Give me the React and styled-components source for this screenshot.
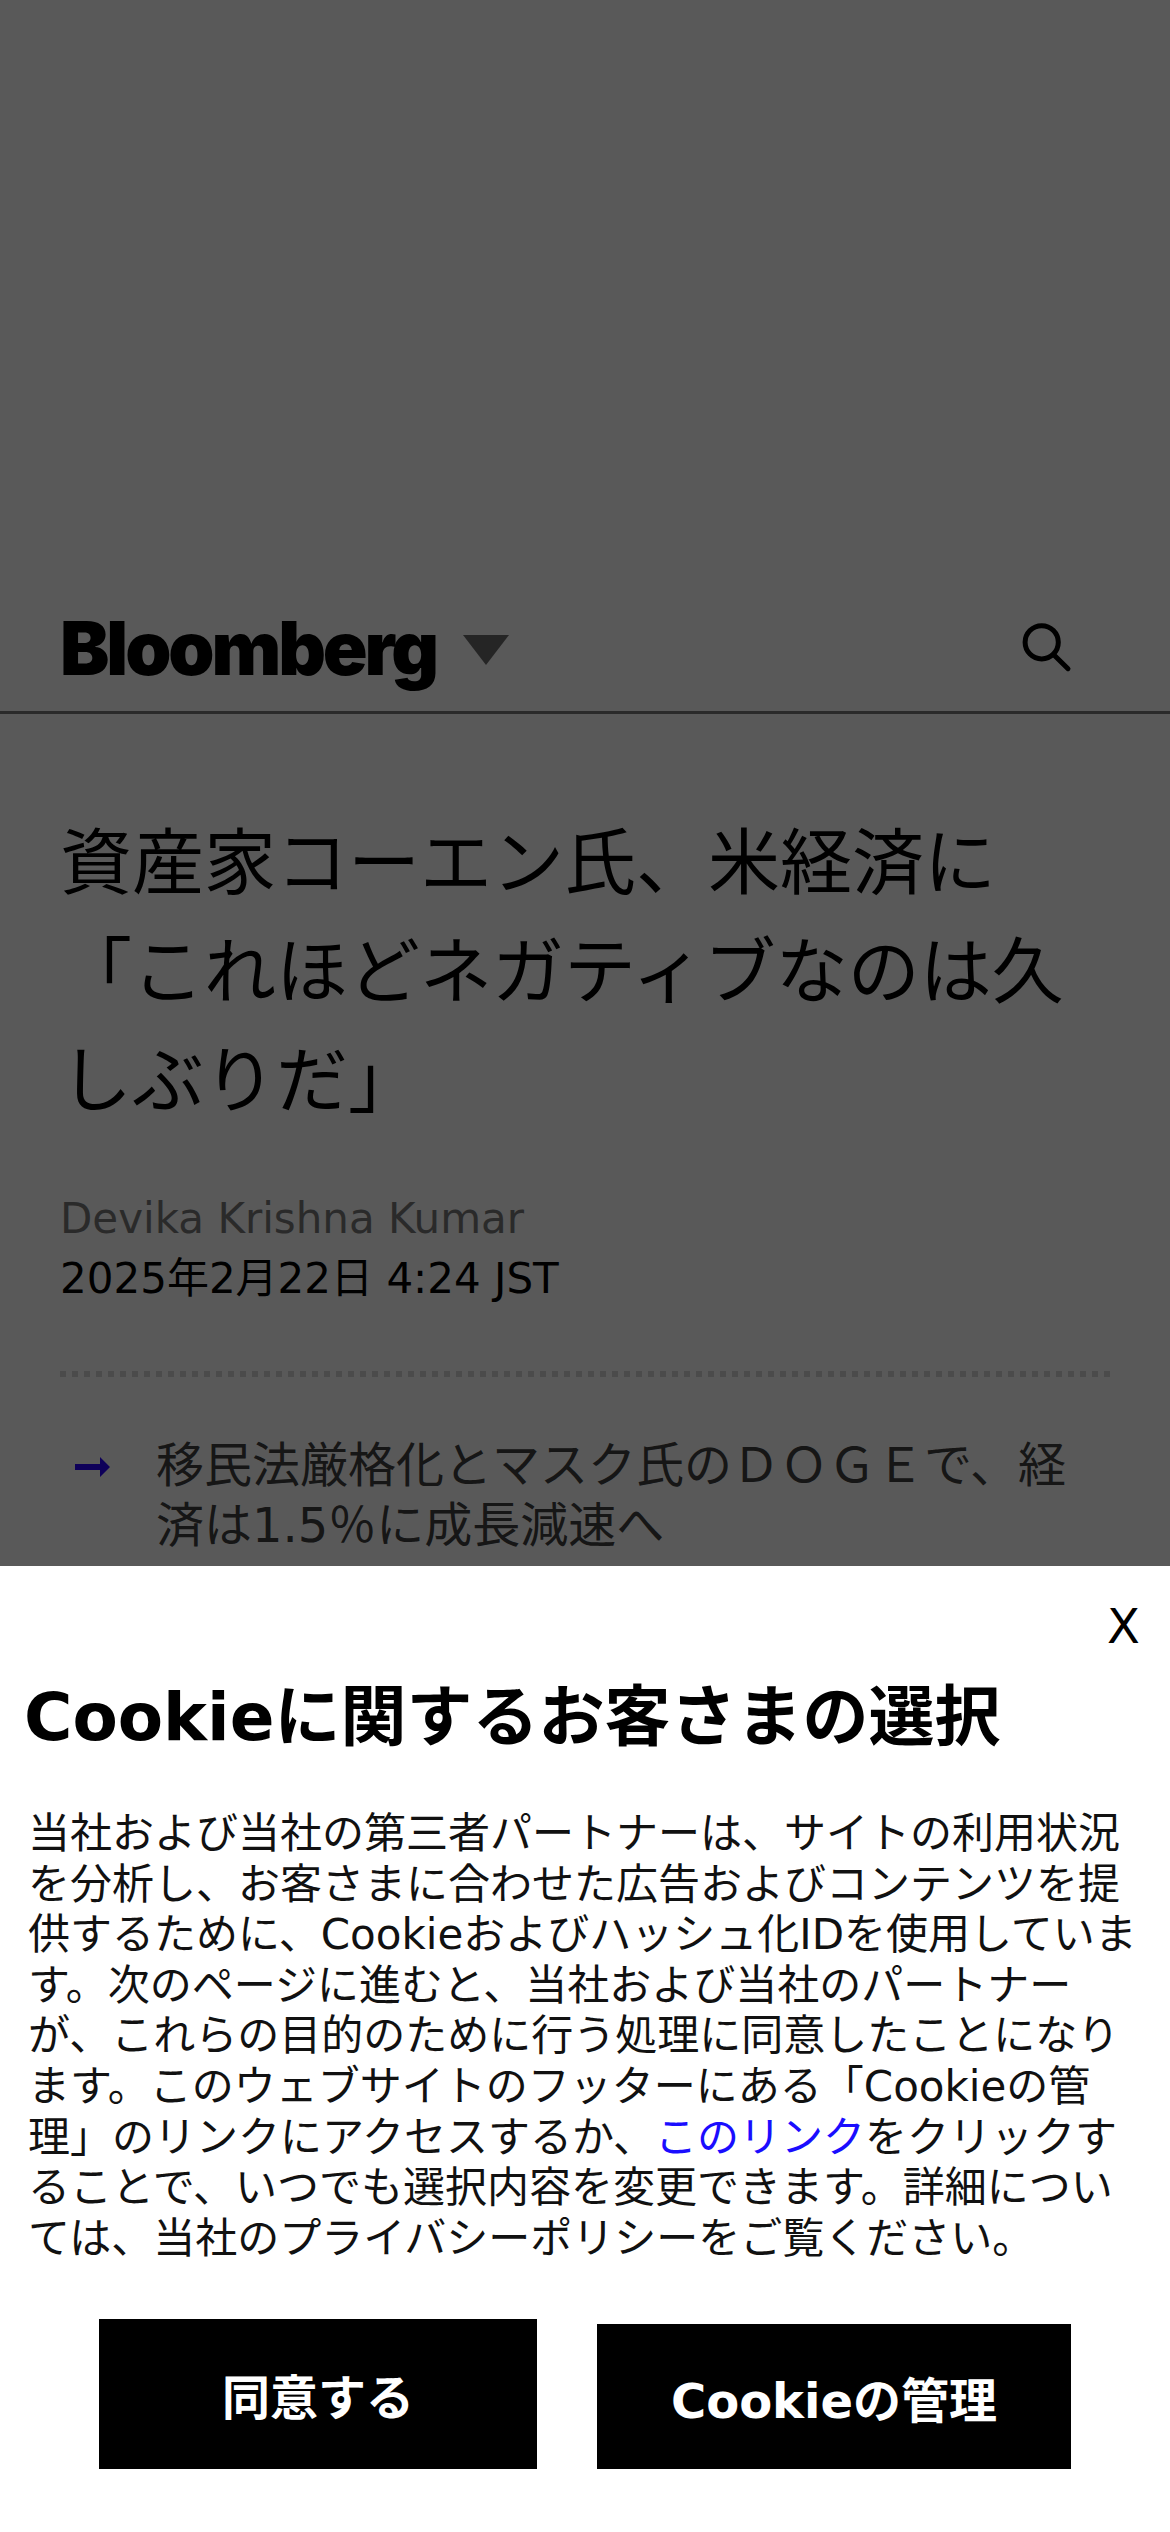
import styled, { createGlobalStyle } from 'styled-components';

const GlobalStyle = createGlobalStyle`
	* {
		box-sizing: border-box;
		margin: 0;
		padding: 0;
	}

	body {
		background: #fff;
		color: #000;
		font-family: 'DejaVu Sans', 'Noto Sans CJK JP', sans-serif;
	}
`;

const Page = styled.div`
	position: relative;
	width: 1170px;
	height: 2532px;
	overflow: hidden;
`;

const AdSpace = styled.div`
	height: 590px;
`;

const Header = styled.header`
	display: flex;
	align-items: center;
	height: 124px;
	padding: 0 97px 0 60px;
	border-bottom: 3px solid #787878;
`;

const Logo = styled.a`
	width: 376px;
	margin-bottom: 5px;
	font-family: Inter, sans-serif;
	font-size: 74px;
	font-weight: 900;
	line-height: 110px;
	letter-spacing: -3.1px;
	white-space: nowrap;
`;

const Caret = styled.span`
	margin-left: 27px;
	border-top: 30px solid #6c6c6c;
	border-left: 23.5px solid transparent;
	border-right: 23.5px solid transparent;
	margin-bottom: 1px;
`;

const SearchButton = styled.button`
	display: flex;
	margin-left: auto;
	margin-bottom: 6px;
	border: none;
	background: none;
`;

const Article = styled.main`
	padding: 95px 60px 0;
`;

const Headline = styled.h1`
	font-size: 72px;
	font-weight: 400;
	line-height: 109px;
`;

const Byline = styled.div`
	margin-top: 53px;
	font-size: 42px;
	line-height: 60px;
`;

const Author = styled.p`
	color: #7a7a7a;
`;

const Divider = styled.div`
	height: 6px;
	margin-top: 62px;
	background: repeating-linear-gradient(to right, #d6d6d6 0 6px, transparent 6px 12px);
`;

const Summary = styled.ul`
	margin-top: 58px;
	list-style: none;
`;

const SummaryItem = styled.li`
	display: flex;
	align-items: flex-start;
	color: #404040;
	font-size: 48px;
	line-height: 60px;

	& > svg {
		flex: none;
		margin: 22px 46px 0 15px;
	}
`;

const Overlay = styled.div`
	position: absolute;
	inset: 0;
	display: flex;
	flex-direction: column;
	justify-content: flex-end;
	background: rgba(0, 0, 0, 0.65);
`;

const Dialog = styled.section`
	display: flex;
	flex-direction: column;
	height: 966px;
	padding: 28px 26px 0 24px;
	background: #fff;
`;

const Close = styled.button`
	align-self: flex-end;
	margin-right: 4px;
	border: none;
	background: none;
	font-family: inherit;
	font-size: 48px;
	line-height: 64px;
`;

const DialogTitle = styled.h2`
	margin-top: 15px;
	font-size: 66px;
	font-weight: 700;
	line-height: 90px;
`;

const Notice = styled.p`
	margin-top: 46px;
	padding-left: 4px;
	color: #111;
	font-size: 42px;
	line-height: 50.6px;

	a {
		color: #1a0dff;
		text-decoration: none;
	}
`;

const Actions = styled.div`
	display: flex;
	align-items: flex-end;
	gap: 60px;
	margin-top: auto;
	padding: 0 73px 63px 75px;
`;

const Action = styled.button`
	width: ${(props) => props.$width}px;
	height: ${(props) => props.$height}px;
	border: none;
	background: #000;
	color: #fff;
	font-family: inherit;
	font-size: 48px;
	font-weight: 700;
`;

const SearchIcon = () => (
	<svg width='52' height='52' viewBox='0 0 52 52' fill='none' stroke='#000' strokeWidth='5'>
		<circle cx='20.7' cy='20.3' r='16.6' />
		<path d='M32.5 32.5 L47 46.7' strokeLinecap='round' />
	</svg>
);

const ArrowIcon = () => (
	<svg width='35' height='20' viewBox='0 0 35 20' fill='#2800ff'>
		<path d='M0 7h25V0l10 10-10 10v-7H0z' />
	</svg>
);

const App = () => {
	return (
		<>
			<GlobalStyle />
			<Page>
				<AdSpace />
				<Header>
					<Logo>Bloomberg</Logo>
					<Caret />
					<SearchButton aria-label='検索'>
						<SearchIcon />
					</SearchButton>
				</Header>
				<Article>
					<Headline>資産家コーエン氏、米経済に「これほどネガティブなのは久しぶりだ」</Headline>
					<Byline>
						<Author>Devika Krishna Kumar</Author>
						<p>2025年2月22日 4:24 JST</p>
					</Byline>
					<Divider />
					<Summary>
						<SummaryItem>
							<ArrowIcon />
							<p>移民法厳格化とマスク氏のＤＯＧＥで、経済は1.5％に成長減速へ</p>
						</SummaryItem>
					</Summary>
				</Article>
				<Overlay>
					<Dialog>
						<Close>X</Close>
						<DialogTitle>Cookieに関するお客さまの選択</DialogTitle>
						<Notice>
							当社および当社の第三者パートナーは、サイトの利用状況を分析し、お客さまに合わせた広告およびコンテンツを提供するために、Cookieおよびハッシュ化IDを使用しています。次のページに進むと、当社および当社のパートナーが、これらの目的のために行う処理に同意したことになります。このウェブサイトのフッターにある「Cookieの管理」のリンクにアクセスするか、<a>このリンク</a>をクリックすることで、いつでも選択内容を変更できます。詳細については、当社のプライバシーポリシーをご覧ください。
						</Notice>
						<Actions>
							<Action $width={438} $height={150}>同意する</Action>
							<Action $width={474} $height={145}>Cookieの管理</Action>
						</Actions>
					</Dialog>
				</Overlay>
			</Page>
		</>
	);
};

export default App;
